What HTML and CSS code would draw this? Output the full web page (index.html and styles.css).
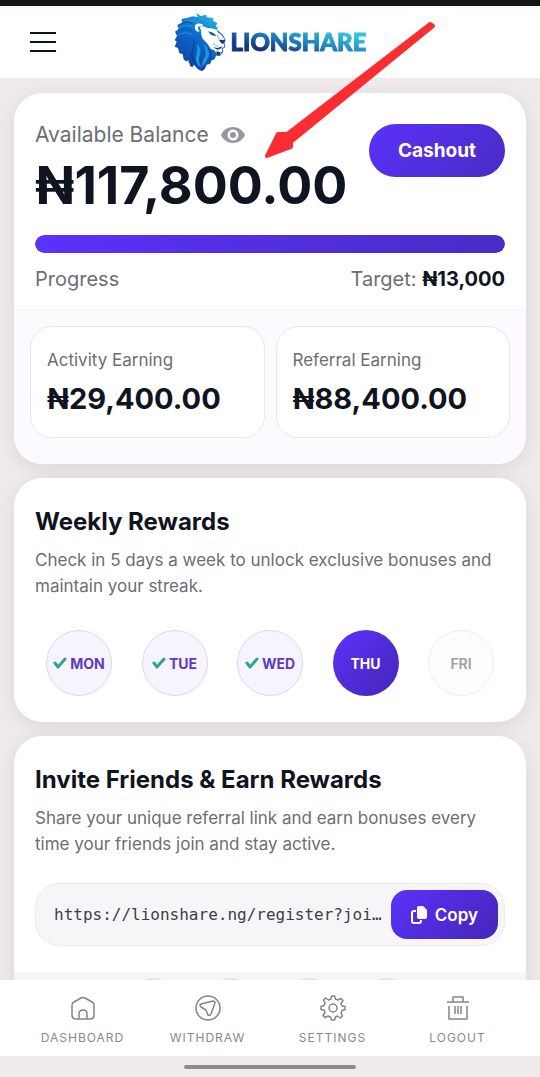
FILE: index.html
```html
<!DOCTYPE html>
<html lang="en">
<head>
  <meta charset="UTF-8">
  <meta name="viewport" content="width=device-width, initial-scale=1.0">
  <title>Lionshare</title>
  <link rel="stylesheet" href="styles.css">
</head>
<body>
  <header class="topbar">
    <button type="button" class="menu-btn" aria-label="Menu">
      <span></span>
      <span></span>
      <span></span>
    </button>
    <a href="#" class="logo">
      <svg class="logo-lion" viewBox="36 36 156 180" aria-hidden="true">
        <defs>
          <linearGradient id="mane" x1="0.8" y1="0" x2="0.3" y2="1">
            <stop offset="0" stop-color="#22b8dc"/>
            <stop offset="0.4" stop-color="#0f6fd0"/>
            <stop offset="1" stop-color="#0f3a9c"/>
          </linearGradient>
        </defs>
        <path fill="url(#mane)" d="M102 38 L116 48 L133 44 L134 52 L154 54 L153 62 L166 70 L162 78 L169 88 L150 90 L142 104 L150 118 L158 140 L152 150 L164 162 L158 178 L149 181 L144 192 L134 194 L129 206 L120 214 L108 208 L96 194 L91 202 L85 199 L79 181 L72 184 L65 178 L62 162 L52 160 L48 144 L38 140 L44 125 L38 120 L45 108 L39 95 L50 87 L46 75 L61 67 L58 57 L77 53 L92 49 L108 51 Z"/>
        <path fill="#1668bd" d="M138 88 L169 92 L183 106 L191 120 L187 128 L190 141 L182 147 L184 156 L173 169 L158 166 L146 150 Z"/>
        <path fill="#fff" d="M112 79 C123 77 132 83 141 85 C154 84 165 91 169 98 C179 103 184 111 188 120 L184 128 L187 140 L179 145 L181 154 L172 165 L163 160 L157 151 L146 147 C141 135 134 129 128 122 C119 117 117 103 117 91 Z"/>
        <path fill="#fff" d="M99 86 C96 72 109 67 121 73 L125 80 C115 75 106 77 108 86 L113 94 C107 96 101 93 99 86 Z"/>
        <path fill="#1556ad" d="M138 94 L153 98 L164 107 L156 107 L148 105 L144 101 Z"/>
        <path fill="#123a83" d="M171 119 L188 120 L189 126 L181 132 L175 126 Z M153 142 L167 144 L180 139 L178 145 L166 149 Z M163 154 L176 157 L172 166 L164 163 Z"/>
        <path fill="none" stroke="#2391d4" stroke-width="2" d="M166 104 L171 119 M154 128 C156 135 162 139 169 138"/>
        <path fill="#1a98e2" d="M104 132 C116 141 119 155 112 170 C109 182 113 194 120 204 C103 195 99 180 102 167 C107 153 106 143 104 132 Z M123 130 C139 143 145 159 138 174 C132 184 129 193 121 199 C119 182 129 176 131 163 C132 151 128 141 123 130 Z"/>
        <path fill="none" stroke="#2aa6e0" stroke-width="2" d="M51 83 C66 75 80 74 91 81 M71 63 C86 57 103 63 111 69 M110 53 C125 55 136 65 144 75 M137 55 L152 68 M46 107 C61 96 76 97 90 105"/>
        <path fill="none" stroke="#0c5cc8" stroke-width="4" d="M48 94 C64 86 81 87 92 94 M43 122 C57 110 73 111 87 120 M48 140 C60 129 75 129 85 139 M55 153 C69 142 80 143 91 153 M67 174 C81 160 82 151 80 144"/>
        <path fill="none" stroke="#0b3a90" stroke-width="3" d="M92 117 C101 130 93 145 90 159 C89 174 95 184 102 191 M137 144 C148 155 149 166 143 182 M60 70 C73 64 83 66 92 72"/>
      </svg>
      <span class="logo-text">LIONSHARE</span>
    </a>
  </header>

  <main class="content">
    <section class="card">
      <div class="balance">
        <div class="balance-top">
          <div>
            <div class="balance-label">
              Available Balance
              <button type="button" class="eye-btn" aria-label="Hide balance">
                <svg viewBox="0 0 24 16" width="24" height="16">
                  <path fill="#96999c" fill-rule="evenodd" d="M12 0 C6.500 0 2 3.500 0 8 C2 12.500 6.500 16 12 16 S22 12.500 24 8 C22 3.500 17.500 0 12 0 Z M12 2.500 A5.500 5.500 0 1 1 12 13.500 A5.500 5.500 0 0 1 12 2.500 Z"/>
                  <circle cx="12" cy="8" r="3" fill="#96999c"/>
                </svg>
              </button>
            </div>
            <div class="balance-amount">₦117,800.00</div>
          </div>
          <button type="button" class="cashout-btn">Cashout</button>
        </div>
        <div class="progress"><div class="progress-fill" style="width: 100%"></div></div>
        <div class="progress-info">
          <span>Progress</span>
          <span>Target: <b>₦13,000</b></span>
        </div>
      </div>
      <div class="earnings">
        <div class="earning">
          <div class="earning-label">Activity Earning</div>
          <div class="earning-amount">₦29,400.00</div>
        </div>
        <div class="earning">
          <div class="earning-label">Referral Earning</div>
          <div class="earning-amount">₦88,400.00</div>
        </div>
      </div>
    </section>

    <section class="card card-body">
      <h2>Weekly Rewards</h2>
      <p>Check in 5 days a week to unlock exclusive bonuses and maintain your streak.</p>
      <div class="days">
        <div class="day done">
          <svg class="check" viewBox="0 0 14 12"><path d="M2 6 L5 10 L12 2"/></svg>MON
        </div>
        <div class="day done">
          <svg class="check" viewBox="0 0 14 12"><path d="M2 6 L5 10 L12 2"/></svg>TUE
        </div>
        <div class="day done">
          <svg class="check" viewBox="0 0 14 12"><path d="M2 6 L5 10 L12 2"/></svg>WED
        </div>
        <button type="button" class="day today">THU</button>
        <div class="day">FRI</div>
      </div>
    </section>

    <section class="card invite">
      <div class="card-body">
        <h2>Invite Friends &amp; Earn Rewards</h2>
        <p>Share your unique referral link and earn bonuses every time your friends join and stay active.</p>
        <div class="link-box">
          <input type="text" class="link-input" aria-label="Referral link" value="https://lionshare.ng/register?joi…" readonly>
          <button type="button" class="copy-btn">
            <svg viewBox="0 0 16 18" width="16" height="18" aria-hidden="true">
              <path fill="#fff" d="M8 0 H12 L16 4 V11 Q16 13 14 13 H8 Q6 13 6 11 V2 Q6 0 8 0 Z"/>
              <path fill="none" stroke="#fff" stroke-width="2" d="M5 5 H3 Q1 5 1 7 V15 Q1 17 3 17 H8 Q10 17 10 15 V14"/>
            </svg>
            Copy
          </button>
        </div>
      </div>
      <div class="share">
        <span></span>
        <span></span>
        <span></span>
        <span></span>
      </div>
    </section>
  </main>

  <nav class="bottom-nav">
    <a href="#">
      <svg viewBox="0 0 28 28">
        <path d="M3 11 Q3 9 5 8 L12 4 Q14 3 16 4 L23 8 Q25 9 25 11 V21 Q25 25 21 25 H7 Q3 25 3 21 Z M10 25 V20 Q10 16 14 16 Q18 16 18 20 V25"/>
      </svg>
      DASHBOARD
    </a>
    <a href="#">
      <svg viewBox="0 0 28 28">
        <circle cx="14" cy="14" r="12"/>
        <path d="M7 10 L19 7 Q21 7 21 9 L17 20 Q16 22 14 21 L12 16 L7 13 Q5 11 7 10 Z"/>
      </svg>
      WITHDRAW
    </a>
    <a href="#">
      <svg viewBox="0 0 28 28">
        <circle cx="14" cy="14" r="4"/>
        <path d="M12.500 2 H15.500 L16.500 5 L19 6 L22 4.500 L24 6.500 L22 9.500 L23 12 L26 12.500 V15.500 L23 16.500 L22 19 L23.500 22 L21.500 24 L18.500 22 L16.500 23 L15.500 26 H12.500 L11.500 23 L9 22 L6 23.500 L4 21.500 L6 18.500 L5 16 L2 15.500 V12.500 L5 11.500 L6 9 L4.500 6 L6.500 4 L9.500 6 L12 5 Z"/>
      </svg>
      SETTINGS
    </a>
    <a href="#">
      <svg viewBox="0 0 28 28">
        <path d="M3 8 H25 M9 8 V3 H19 V8 M5 12 V25 H23 V12 M11 12 V20 M14 12 V20 M17 12 V20"/>
      </svg>
      LOGOUT
    </a>
  </nav>
  <div class="home-bar"><span></span></div>

  <!-- pointer to the balance -->
  <svg class="arrow" viewBox="0 0 172 140" aria-hidden="true">
    <path fill="#fa2d33" stroke="#fa2d33" stroke-width="4" stroke-linejoin="round" d="M166 3 L169 5 L27 121 L27 126 L3 135 L14 113 L23 113 Z"/>
  </svg>
</body>
</html>
```
FILE: styles.css
```css
* {
  box-sizing: border-box;
}
body {
  margin: 0;
  height: 100vh;
  display: flex;
  flex-direction: column;
  overflow: hidden;
  background: #efebed;
  font-family: Inter, "Noto Sans", sans-serif;
  color: #101420;
}
button,
input {
  font-family: inherit;
  border: none;
  padding: 0;
}
button {
  cursor: pointer;
}

/* header */
.topbar {
  display: grid;
  grid-template-columns: 1fr auto 1fr;
  align-items: center;
  flex: none;
  height: 78px;
  padding: 0 30px;
  background: #fff;
  border-top: 6px solid #121714;
}
.menu-btn {
  display: flex;
  flex-direction: column;
  gap: 7px;
  width: 26px;
  background: none;
}
.menu-btn span {
  height: 2px;
  background: #0a1420;
}
.logo {
  display: flex;
  align-items: center;
  gap: 5px;
  text-decoration: none;
}
.logo-lion {
  width: 52px;
  height: 60px;
}
.logo-text {
  font-family: Lato, sans-serif;
  font-size: 24px;
  font-weight: 900;
  line-height: 32px;
  color: transparent;
  background: linear-gradient(to top right, #16347f 25%, #1b7dbd 50%, #35c3dc 80%);
  -webkit-background-clip: text;
  background-clip: text;
  -webkit-text-stroke: 1px transparent;
}

/* cards */
.content {
  flex: 1;
  min-height: 0;
  overflow: hidden;
  display: flex;
  flex-direction: column;
  gap: 14px;
  padding: 15px 14px 0;
}
.card {
  flex: none;
  background: #fff;
  border-radius: 28px;
  box-shadow: 0 4px 20px rgba(0, 0, 0, 0.09);
}
.card-body {
  padding: 28px 21px 26px;
}
h2 {
  margin: 0 0 9px;
  font-size: 24px;
  line-height: 32px;
  font-weight: 700;
}
p {
  margin: 0;
  font-size: 17px;
  line-height: 26px;
  color: #6b6e73;
}

/* balance */
.balance {
  padding: 28px 21px 16px;
}
.balance-top {
  display: flex;
  justify-content: space-between;
  align-items: flex-start;
  margin-bottom: 16px;
}
.balance-label {
  display: flex;
  align-items: center;
  gap: 12px;
  font-size: 21px;
  line-height: 28px;
  color: #6b6e73;
}
.eye-btn {
  display: flex;
  background: none;
}
.balance-amount {
  margin-top: 4px;
  font-size: 52px;
  font-weight: 700;
  line-height: 66px;
}
.cashout-btn {
  height: 53px;
  margin-top: 3px;
  padding: 0 29px;
  border-radius: 27px;
  font-size: 19px;
  font-weight: 700;
  color: #fff;
  background: linear-gradient(135deg, #5a32fa, #4a2bc4);
}
.progress {
  height: 18px;
  border-radius: 9px;
  background: #e9e6f5;
  overflow: hidden;
}
.progress-fill {
  height: 100%;
  border-radius: 9px;
  background: linear-gradient(90deg, #5a32fa, #4a2bc4);
}
.progress-info {
  display: flex;
  justify-content: space-between;
  margin-top: 12px;
  font-size: 20px;
  line-height: 28px;
  color: #6b6e73;
}
.progress-info b {
  color: #101420;
}
.earnings {
  display: grid;
  grid-template-columns: 1fr 1fr;
  gap: 11px;
  padding: 16px 16px 26px;
  background: #fdfaff;
  border-top: 1px solid #f6f4f8;
  border-radius: 0 0 28px 28px;
}
.earning {
  padding: 20px 16px 18px;
  background: #fff;
  border: 1px solid #e6e8f0;
  border-radius: 22px;
}
.earning-label {
  font-size: 17px;
  line-height: 26px;
  color: #6b6e73;
}
.earning-amount {
  margin-top: 6px;
  font-size: 29px;
  font-weight: 700;
  line-height: 40px;
}

/* weekly rewards */
.days {
  display: flex;
  justify-content: space-between;
  margin-top: 31px;
  padding: 0 11px;
}
.day {
  display: flex;
  align-items: center;
  justify-content: center;
  gap: 3px;
  width: 66px;
  height: 66px;
  border: 1px solid #f0ecf4;
  border-radius: 50%;
  background: #fefcff;
  font-size: 14px;
  font-weight: 600;
  color: #9b9ea2;
}
.day.done {
  background: #f7f4ff;
  border-color: #e0d6ea;
  font-weight: 700;
  color: #5b3bc0;
}
.day.today {
  border: none;
  background: linear-gradient(135deg, #5a32fa, #4526b8);
  font-weight: 700;
  color: #fff;
}
.check {
  width: 14px;
  height: 12px;
  fill: none;
  stroke: #2fa884;
  stroke-width: 3;
  stroke-linecap: round;
  stroke-linejoin: round;
}

/* invite */
.link-box {
  display: flex;
  align-items: center;
  margin-top: 26px;
  padding: 6px 6px 6px 18px;
  background: #f6f6f9;
  border: 1px solid #f0e9f2;
  border-radius: 24px;
}
.link-input {
  flex: 1;
  min-width: 0;
  margin-right: 6px;
  background: none;
  font-family: "DejaVu Sans Mono", monospace;
  font-size: 16px;
  color: #3b4048;
  text-overflow: ellipsis;
}
.copy-btn {
  display: flex;
  align-items: center;
  gap: 8px;
  height: 49px;
  padding: 0 20px;
  border-radius: 16px;
  font-size: 17px;
  font-weight: 600;
  color: #fff;
  background: linear-gradient(135deg, #5a32fa, #4526b8);
}
.share {
  display: flex;
  justify-content: center;
  gap: 30px;
  height: 60px;
  padding-top: 6px;
  background: #f6f5f7;
}
.share span {
  width: 48px;
  height: 48px;
  border-radius: 50%;
  background: #e4e2e5;
}

/* bottom navigation */
.bottom-nav {
  display: flex;
  flex: none;
  padding: 14px 20px 9px;
  background: #fff;
}
.bottom-nav a {
  flex: 1;
  display: flex;
  flex-direction: column;
  align-items: center;
  gap: 7px;
  font-size: 12px;
  line-height: 18px;
  letter-spacing: 1px;
  color: #858b90;
  text-decoration: none;
}
.bottom-nav svg {
  width: 28px;
  height: 28px;
  fill: none;
  stroke: #7f868a;
  stroke-width: 1.5;
  stroke-linejoin: round;
}
.home-bar {
  display: flex;
  flex: none;
  justify-content: center;
  align-items: center;
  height: 21px;
}
.home-bar span {
  width: 172px;
  height: 4px;
  border-radius: 2px;
  background: #8c8c8e;
}

.arrow {
  position: absolute;
  top: 21px;
  left: 264px;
  width: 172px;
  height: 140px;
}
```
